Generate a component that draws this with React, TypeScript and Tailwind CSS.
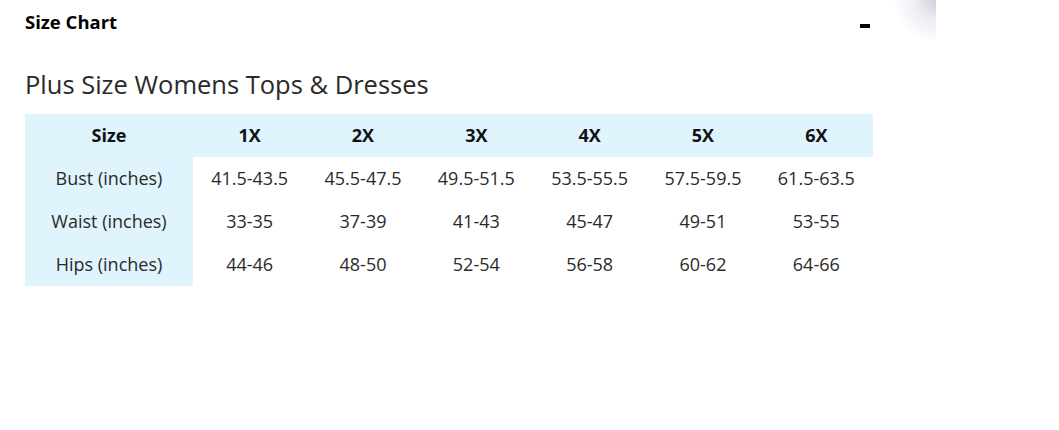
import React from 'react';

const sizes = ['1X', '2X', '3X', '4X', '5X', '6X'];

const rows = [
  { label: 'Bust (inches)', values: ['41.5-43.5', '45.5-47.5', '49.5-51.5', '53.5-55.5', '57.5-59.5', '61.5-63.5'] },
  { label: 'Waist (inches)', values: ['33-35', '37-39', '41-43', '45-47', '49-51', '53-55'] },
  { label: 'Hips (inches)', values: ['44-46', '48-50', '52-54', '56-58', '60-62', '64-66'] },
];

export default function App() {
  return (
    <div className="relative w-[1059px] h-[430px] bg-white text-[#2a2a2a] font-['Open_Sans',sans-serif] overflow-hidden">
      {/* corner shade */}
      <div className="absolute left-[895px] top-0 w-[41px] h-[40px] bg-[radial-gradient(circle_at_top_right,#cfd0dc_0%,#ecedf3_35%,rgba(255,255,255,0)_75%)]" />

      <div className="w-[848px] ml-[25px]">
        <div className="flex items-center justify-between h-[44px] pb-[1px]">
          <h3 className="text-[18.5px] font-bold text-black">Size Chart</h3>
          <span className="block w-[10px] h-[4px] bg-black mr-[3px] mt-[8px]" />
        </div>

        <h2 className="mt-[24px] text-[25.5px] leading-[33px]">Plus Size Womens Tops &amp; Dresses</h2>

        <table className="mt-[13px] w-full border-collapse text-[18px]">
          <thead>
            <tr className="bg-[#dff4fd] h-[43px] text-[#111]">
              <th className="w-[168px] font-bold text-center">Size</th>
              {sizes.map(s => (
                <th key={s} className="font-bold text-center">{s}</th>
              ))}
            </tr>
          </thead>
          <tbody>
            {rows.map(r => (
              <tr key={r.label} className="h-[43px]">
                <td className="bg-[#dff4fd] text-center">{r.label}</td>
                {r.values.map((v, i) => (
                  <td key={i} className="text-center">{v}</td>
                ))}
              </tr>
            ))}
          </tbody>
        </table>
      </div>
    </div>
  );
}
